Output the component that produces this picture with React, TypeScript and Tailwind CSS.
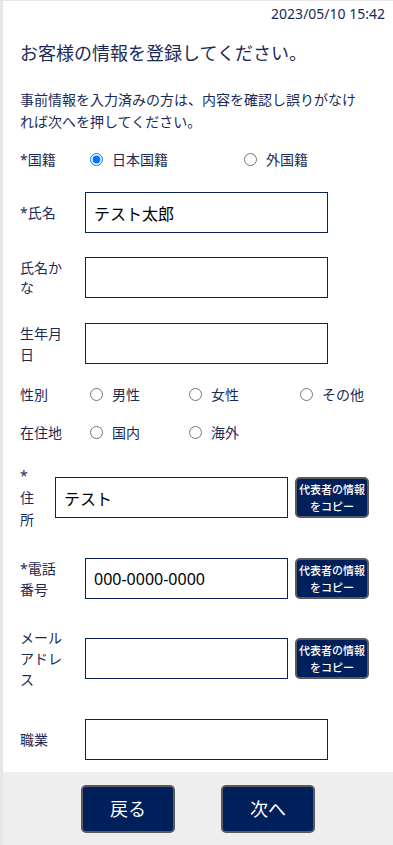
import React from "react"

function CopyButton() {
  return (
    <button className="w-[74px] h-[41px] shrink-0 bg-[#00205b] border-2 border-[#5a5a5a] rounded-[5px] text-white text-[11px] leading-[17px] font-medium whitespace-nowrap flex flex-col items-center justify-center">
      <span>代表者の情報</span>
      <span>をコピー</span>
    </button>
  )
}

function TextInput({ width, value }: { width: string; value?: string }) {
  return (
    <input
      type="text"
      defaultValue={value}
      className={`${width} h-[41px] shrink-0 border border-[#0b1f5c] bg-white px-[8px] text-[16px] text-black outline-none`}
    />
  )
}

function Radio({ name, label, width, checked }: { name: string; label: string; width: string; checked?: boolean }) {
  return (
    <label className={`${width} flex items-center gap-[9px]`}>
      <input type="radio" name={name} defaultChecked={checked} className="m-0 w-[13px] h-[13px]" />
      <span>{label}</span>
    </label>
  )
}

export default function App() {
  return (
    <div className="min-h-[845px] bg-white border-l-[3px] border-t border-[#e6e6e6] font-['Noto_Sans','Noto_Sans_CJK_JP',sans-serif] text-[#1b2a55] text-[14px] flex flex-col">
      <div className="pl-[17px] pr-[8px]">
        <p className="pt-[5px] text-right text-[14px] leading-[16px]">2023/05/10 15:42</p>
        <h1 className="mt-[18px] text-[18px] leading-[26px]">お客様の情報を登録してください。</h1>
        <p className="mt-[23px] text-[14px] leading-[22px] pr-[24px]">
          事前情報を入力済みの方は、内容を確認し誤りがなければ次へを押してください。
        </p>

        <div className="mt-[16px] h-[20px] flex items-center">
          <span className="w-[70px]">*国籍</span>
          <Radio name="nationality" label="日本国籍" width="w-[154px]" checked />
          <Radio name="nationality" label="外国籍" width="w-[100px]" />
        </div>

        <div className="mt-[23px] h-[41px] flex items-center">
          <span className="w-[65px]">*氏名</span>
          <TextInput width="w-[243px]" value="テスト太郎" />
        </div>

        <div className="mt-[24px] h-[41px] flex items-center">
          <span className="w-[65px] leading-[20px]">
            氏名か
            <br />な
          </span>
          <TextInput width="w-[243px]" />
        </div>

        <div className="mt-[25px] h-[41px] flex items-center">
          <span className="w-[65px] leading-[21px]">
            生年月
            <br />日
          </span>
          <TextInput width="w-[243px]" />
        </div>

        <div className="mt-[20px] h-[20px] flex items-center">
          <span className="w-[70px]">性別</span>
          <Radio name="gender" label="男性" width="w-[99px]" />
          <Radio name="gender" label="女性" width="w-[111px]" />
          <Radio name="gender" label="その他" width="w-[80px]" />
        </div>

        <div className="mt-[18px] h-[20px] flex items-center">
          <span className="w-[70px]">在住地</span>
          <Radio name="residence" label="国内" width="w-[99px]" />
          <Radio name="residence" label="海外" width="w-[99px]" />
        </div>

        <div className="mt-[35px] h-[41px] flex items-center">
          <span className="w-[35px] leading-[22px]">
            *<br />住<br />所
          </span>
          <TextInput width="w-[233px]" value="テスト" />
          <div className="ml-[7px]">
            <CopyButton />
          </div>
        </div>

        <div className="mt-[40px] h-[41px] flex items-center">
          <span className="w-[65px] leading-[21px]">
            *電話
            <br />番号
          </span>
          <TextInput width="w-[203px]" value="000-0000-0000" />
          <div className="ml-[7px]">
            <CopyButton />
          </div>
        </div>

        <div className="mt-[39px] h-[41px] flex items-center">
          <span className="w-[65px] leading-[21px]">
            メール
            <br />アドレ
            <br />ス
          </span>
          <TextInput width="w-[203px]" />
          <div className="ml-[7px]">
            <CopyButton />
          </div>
        </div>

        <div className="mt-[40px] h-[41px] flex items-center">
          <span className="w-[65px]">職業</span>
          <TextInput width="w-[243px]" />
        </div>
      </div>

      <div className="mt-[12px] flex-1 bg-[#eeeeee] pt-[13px] pb-[12px] flex justify-center gap-[46px]">
        <button className="w-[94px] h-[48px] bg-[#00205b] border-2 border-[#5a5a5a] rounded-[5px] text-white text-[18px]">
          戻る
        </button>
        <button className="w-[94px] h-[48px] bg-[#00205b] border-2 border-[#5a5a5a] rounded-[5px] text-white text-[18px]">
          次へ
        </button>
      </div>
    </div>
  )
}
